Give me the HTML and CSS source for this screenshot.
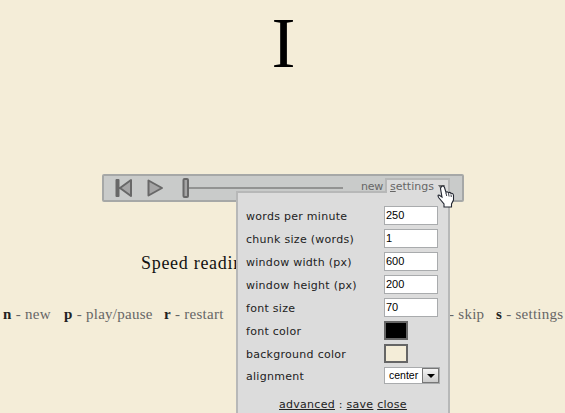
FILE: index.html
```html
<!DOCTYPE html>
<html lang="en">
<head>
<meta charset="utf-8">
<title>Speed reading</title>
<link rel="stylesheet" href="styles.css">
</head>
<body>
<main class="page">
  <div class="word">I</div>
  <div class="player">
    <svg class="transport" width="250" height="24" viewBox="0 0 250 24">
      <g fill="#a5a5a5" stroke="#686868" stroke-width="2" stroke-linejoin="round">
        <path d="M12.500 4h2v16h-2zM27 4v16l-11-8z"/>
        <path d="M44.500 4.500v15l13.500-7.500z"/>
        <path d="M85 12H239" stroke="#929392"/>
        <rect x="79.500" y="3" width="4.500" height="18" rx="1"/>
      </g>
    </svg>
    <span class="new">new</span>
    <div class="tab"><u>s</u>ettings</div>
  </div>
  <p class="caption">Speed reading</p>
  <div class="keys">
    <span class="k-new"><b>n</b> - new</span>
    <span class="k-play"><b>p</b> - play/pause</span>
    <span class="k-restart"><b>r</b> - restart</span>
    <span class="k-skip">- skip</span>
    <span class="k-settings"><b>s</b> - settings</span>
  </div>
</main>
<form class="menu">
  <div class="row"><label>words per minute</label><span class="field">250</span></div>
  <div class="row"><label>chunk size (words)</label><span class="field">1</span></div>
  <div class="row"><label>window width (px)</label><span class="field">600</span></div>
  <div class="row"><label>window height (px)</label><span class="field">200</span></div>
  <div class="row"><label>font size</label><span class="field">70</span></div>
  <div class="row"><label>font color</label><span class="swatch black"></span></div>
  <div class="row"><label>background color</label><span class="swatch cream"></span></div>
  <div class="row align"><label>alignment</label><span class="select">center<span class="drop"><svg width="8" height="4" viewBox="0 0 8 4"><path d="M0 0h8L4 4z"/></svg></span></span></div>
  <div class="actions"><u>advanced</u> : <u>save</u> <u>close</u></div>
</form>
<svg class="cursor" width="30" height="26" viewBox="0 0 30 26">
  <path d="M1 1h7l-3.500 5z" fill="#686868"/>
  <path d="M4.500 2.500Q6.500 1 7.500 3.500L9 8.500Q10 6.800 11.500 9Q13 7.500 14 9.500Q16 8.700 16.500 11.500V16L14.500 20V23H7V20L2 14Q0 11 2 11L5 13L3.500 4.500Z" fill="#fff" stroke="#222630" stroke-width="1.100"/>
  <path d="M9 9l.7 3M11.500 9.500l.6 3M14 10.500l.3 2.500" fill="none" stroke="#222630" stroke-width=".9"/>
</svg>
</body>
</html>
```
FILE: styles.css
```css
* { box-sizing: border-box; }
body {
  margin: 0;
  width: 565px;
  height: 413px;
  overflow: hidden;
  position: relative;
  background: #f4edd8;
  color: #111;
  font-family: "Liberation Serif", serif;
}
.word {
  height: 174px;
  padding: 1px 0 0 2px;
  text-align: center;
  font-size: 72px;
  line-height: 84px;
  color: #000;
}
.player {
  display: flex;
  width: 362px;
  height: 28px;
  margin-left: 102px;
  border: 2px solid #a6a8a7;
  border-radius: 2px;
  background: #c9cbca;
  font: 11px/21px "DejaVu Sans", sans-serif;
  color: #666;
}
.new { margin-left: 7px; width: 24px; letter-spacing: -.2px; }
.tab {
  position: relative;
  z-index: 2;
  width: 65px;
  height: 15px;
  margin-top: 2px;
  padding-left: 3px;
  line-height: 14px;
  border: solid #b7b8b8;
  border-width: 2px 2px 0;
  background: #dcdcdc;
}
.caption {
  margin: 50px 0 0 141px;
  font-size: 18px;
  line-height: 22px;
  letter-spacing: .7px;
}
.keys {
  display: flex;
  margin: 30px 0 0 3px;
  font-size: 15px;
  line-height: 20px;
  letter-spacing: .27px;
  color: #666;
  white-space: nowrap;
}
.keys b { color: #222; }
.k-new { width: 61px; }
.k-play { width: 100px; }
.k-restart { width: 285px; }
.k-skip { width: 47px; }
.menu {
  position: absolute;
  left: 236px;
  top: 191px;
  z-index: 1;
  width: 214px;
  height: 230px;
  padding: 13px 8px 0;
  border: 2px solid #b7b8b8;
  background: #dcdcdc;
  font: 11px/22px "DejaVu Sans", sans-serif;
  letter-spacing: .28px;
  color: #222;
}
.row { display: flex; height: 23px; }
.row label { width: 138px; white-space: nowrap; }
.field {
  width: 54px;
  height: 19px;
  padding-left: 1px;
  border: 1px solid #a9abad;
  background: #fff;
  color: #000;
  font: 11px/17px "Liberation Sans", sans-serif;
  letter-spacing: 0;
}
.swatch { width: 24px; height: 19px; border: 2px solid #666; }
.black { background: #000; }
.cream { background: #f4edd8; }
.row.align { height: 28px; line-height: 19px; }
.select {
  display: flex;
  justify-content: space-between;
  width: 56px;
  height: 17px;
  padding-left: 4px;
  border: 1px solid #a9abad;
  background: #fff;
  color: #000;
  font: 10.5px/14px "Liberation Sans", sans-serif;
  letter-spacing: 0;
}
.drop {
  display: flex;
  align-items: center;
  justify-content: center;
  width: 17px;
  height: 15px;
  border: 1px solid #777;
  background: linear-gradient(#f4f4f4, #ccc);
}
.actions { padding-left: 33px; line-height: 19px; white-space: nowrap; }
.cursor { position: absolute; z-index: 3; left: 437px; top: 184px; }
```
